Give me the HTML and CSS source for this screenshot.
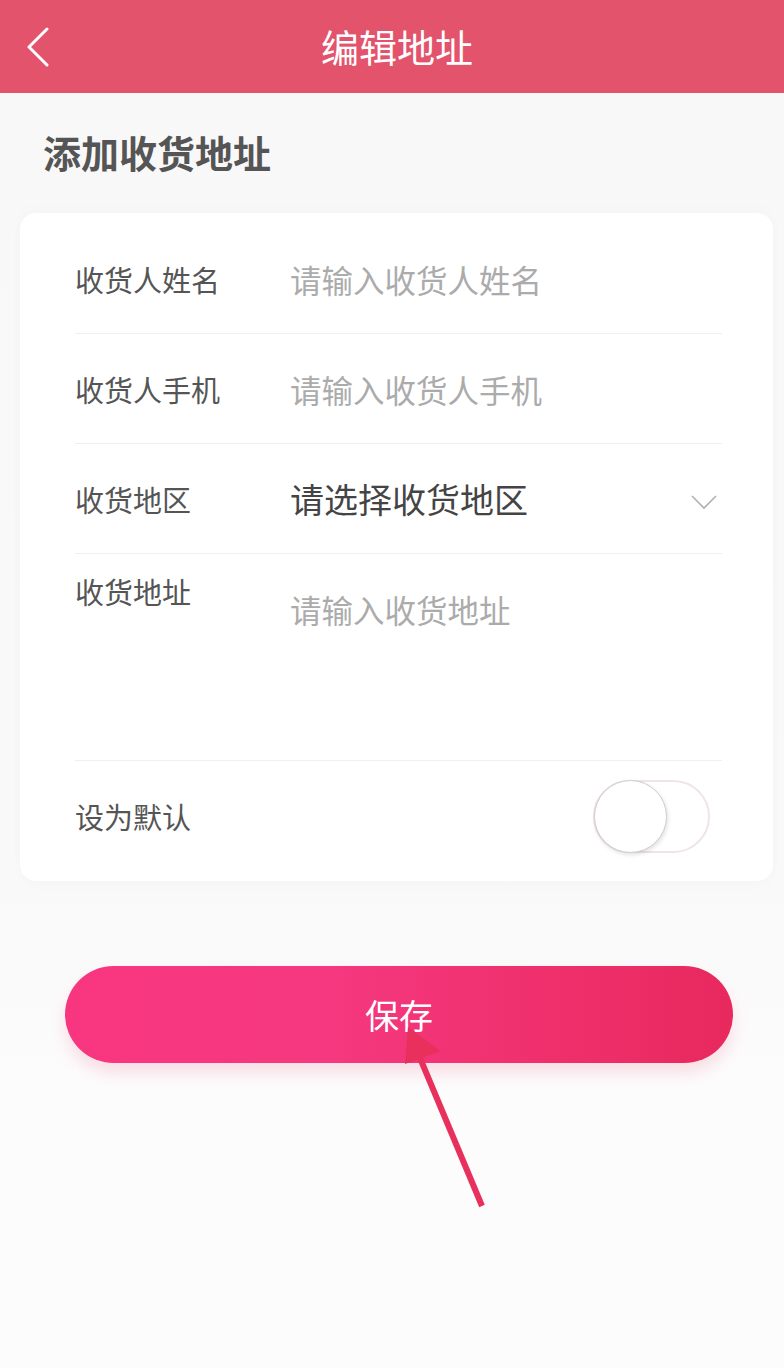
FILE: index.html
```html
<!DOCTYPE html>
<html lang="zh-CN">
<head>
<meta charset="utf-8">
<title>编辑地址</title>
<link rel="stylesheet" href="styles.css">
</head>
<body>
<div class="page">
  <header class="topbar">
    <div class="topbar-left">
      <svg class="back" width="24" height="40" viewBox="0 0 24 40"><polyline points="21,2 3,20 21,38" fill="none" stroke="#fff" stroke-width="3" stroke-linecap="round" stroke-linejoin="round"/></svg>
    </div>
    <h1 class="topbar-title">编辑地址</h1>
    <div class="topbar-right"></div>
  </header>

  <h2 class="section-title">添加收货地址</h2>

  <section class="card">
    <div class="row">
      <span class="label">收货人姓名</span>
      <span class="placeholder">请输入收货人姓名</span>
    </div>
    <div class="row">
      <span class="label">收货人手机</span>
      <span class="placeholder">请输入收货人手机</span>
    </div>
    <div class="row">
      <span class="label">收货地区</span>
      <span class="value">请选择收货地区</span>
      <svg class="chevron" width="26" height="16" viewBox="0 0 26 16"><polyline points="1,2 13,14 25,2" fill="none" stroke="#b0b0b0" stroke-width="1.6"/></svg>
    </div>
    <div class="row row-address">
      <span class="label">收货地址</span>
      <span class="placeholder address-ph">请输入收货地址</span>
    </div>
    <div class="row row-default">
      <span class="label">设为默认</span>
      <span class="toggle"><span class="knob"></span></span>
    </div>
  </section>

  <div class="actions">
    <button class="save">保存</button>
  </div>

  <svg class="pointer" width="784" height="1368" viewBox="0 0 784 1368">
    <line x1="482" y1="1206" x2="420" y2="1058" stroke="#e8305d" stroke-width="6"/>
    <polygon points="408,1027 441,1051 405,1064" fill="#e8305d"/>
  </svg>
</div>
</body>
</html>
```

FILE: styles.css
```css
* { box-sizing: border-box; }
html, body { margin: 0; padding: 0; }
body {
  background: #f8f8f8;
  font-family: "Noto Sans CJK SC", "Noto Sans", sans-serif;
  width: 784px;
  min-height: 1368px;
}
.page { position: relative; min-height: 1368px; background: linear-gradient(#f8f8f8 0, #f9f9f9 900px, #fdfcfd 1100px); }

.topbar {
  height: 93px;
  background: #e3536c;
  display: grid;
  grid-template-columns: 1fr auto 1fr;
  align-items: center;
}
.topbar-left { padding-left: 26px; display: flex; align-items: center; }
.back { display: block; }
.topbar-title {
  margin: 0;
  color: #fff;
  font-weight: 400;
  font-size: 38px;
  line-height: 1;
  padding: 0 0 2px 10px;
}

.section-title {
  margin: 0;
  padding: 36px 0 0 43px;
  font-size: 38px;
  line-height: 46px;
  font-weight: 700;
  color: #555;
  height: 120px;
}

.card {
  margin: 0 11px 0 20px;
  background: #fff;
  border-radius: 16px;
  padding: 11px 51px 0 55px;
  box-shadow: 0 -6px 14px rgba(0,0,0,0.015), 0 4px 12px rgba(0,0,0,0.02);
}
.row {
  display: flex;
  align-items: center;
  height: 110px;
  border-bottom: 1px solid #efefef;
}
.label {
  width: 215px;
  flex: none;
  font-size: 29px;
  color: #555;
}
.placeholder {
  font-size: 31.5px;
  color: #ababab;
}
.value {
  font-size: 34px;
  color: #444;
  flex: 1;
}
.chevron { margin-right: 5px; margin-top: 6px; }

.row-address {
  height: 207px;
  align-items: flex-start;
  padding-top: 16px;
}
.address-ph { margin-top: 16px; }

.row-default {
  height: 120px;
  border-bottom: none;
  padding-bottom: 10px;
}
.row-default .label { flex: 1; }
.toggle {
  width: 117px;
  height: 73px;
  border: 2px solid #efe4e6;
  border-radius: 37px;
  margin-right: 12px;
  position: relative;
  background: #fff;
}
.knob {
  position: absolute;
  left: -1px;
  top: -2px;
  width: 73px;
  height: 73px;
  border-radius: 50%;
  background: #fff;
  border: 1.5px solid #d2cccc;
  box-shadow: 1px 2px 4px rgba(0,0,0,0.12);
}

.actions {
  padding: 85px 51px 0 65px;
}
.save {
  display: block;
  width: 100%;
  height: 97px;
  border: none;
  border-radius: 49px;
  background: linear-gradient(90deg, #f8367f 0%, #f5387f 40%, #ee2f6b 75%, #e8295e 100%);
  color: #fff;
  font-family: "Noto Sans CJK SC", sans-serif;
  font-size: 34px;
  box-shadow: 0 10px 16px rgba(225, 90, 120, 0.18);
  padding: 0;
}

.pointer {
  position: absolute;
  left: 0;
  top: 0;
  pointer-events: none;
}
```
